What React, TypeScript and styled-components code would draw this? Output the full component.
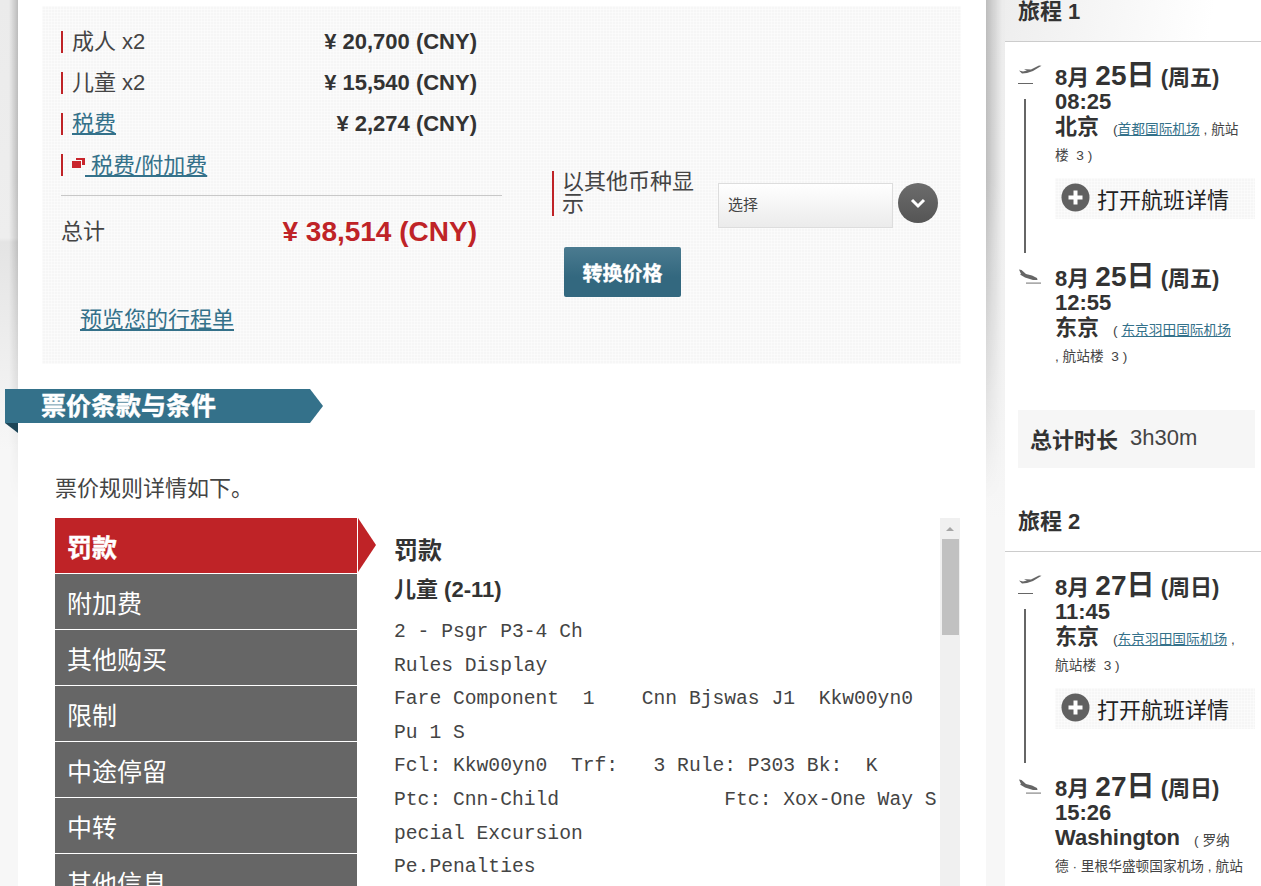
import React from "react";
import styled, { createGlobalStyle } from "styled-components";

const GlobalStyle = createGlobalStyle`
  html, body { margin: 0; padding: 0; height: 886px; overflow: hidden; background: #f6f6f6; }
  body { font-family: "Liberation Sans", "Noto Sans CJK SC", sans-serif; color: #333; }
  * { box-sizing: border-box; }
`;

const dots = `
  background-color: #f6f6f6;
  background-image:
    linear-gradient(90deg, rgba(255,255,255,.4) 1px, transparent 1px),
    linear-gradient(rgba(255,255,255,.4) 1px, transparent 1px);
  background-size: 3px 3px;
`;

const Page = styled.div`
  position: relative;
  display: flex;
  width: 1261px;
  height: 886px;
  overflow: hidden;
  background:
    linear-gradient(180deg, #ebebeb 0, #eeeeee 238px, #e4e4e4 242px, #f7f7f7 450px) 0 0 / 18px 100% no-repeat,
    linear-gradient(180deg, #ececec 0, #f0f0f0 300px, #f7f7f7 520px);
  &::before {
    content: "";
    position: absolute;
    left: 0;
    top: 0;
    width: 1005px;
    height: 520px;
    background: linear-gradient(
      90deg,
      transparent 9px,
      rgba(0, 0, 0, 0.2) 18px,
      rgba(0, 0, 0, 0.2) 986px,
      transparent 1002px
    );
    -webkit-mask-image: linear-gradient(180deg, #000 180px, transparent 500px);
    mask-image: linear-gradient(180deg, #000 180px, transparent 500px);
  }
`;

const Main = styled.main`
  position: relative;
  width: 968px;
  height: 886px;
  margin-left: 18px;
  flex: none;
  background: #fff;
`;

const PricePanel = styled.section`
  ${dots}
  display: flex;
  width: 919px;
  height: 358px;
  margin: 6px 0 25px 24px;
  padding: 0 0 0 19px;
`;

const Fares = styled.div`
  width: 441px;
  flex: none;
  padding-top: 25px;
`;

const FareRow = styled.div`
  display: flex;
  justify-content: space-between;
  align-items: center;
  height: 22px;
  margin-bottom: 19px;
  padding: 0 25px 0 9px;
  border-left: 2px solid #bf2327;
  font-size: 22px;
  color: #444;
`;

const FareLabel = styled.span<{ $lift: number }>`
  margin-bottom: ${(p) => p.$lift}px;
`;

const Amount = styled.span`
  font-weight: 700;
  font-size: 22px;
  color: #333;
`;

const FareLink = styled.a`
  color: #34718a;
  text-decoration: underline;
`;

const TaxIcon = styled.svg`
  width: 13px;
  height: 10px;
  margin-bottom: 5px;
`;

const Divider = styled.hr`
  margin: 1px 0 0;
  border: 0;
  border-top: 1px solid #c8c8c8;
`;

const TotalRow = styled.div`
  display: flex;
  justify-content: space-between;
  align-items: center;
  height: 36px;
  margin-top: 18px;
  padding-right: 25px;
  font-size: 22px;
  color: #444;
`;

const TotalLabel = styled.span`
  margin-bottom: 6px;
`;

const TotalAmount = styled.span`
  font-weight: 700;
  font-size: 28px;
  color: #bf2327;
`;

const PreviewLink = styled.a`
  display: block;
  margin: 55px 0 0 19px;
  font-size: 22px;
  line-height: 30px;
  color: #34718a;
  text-decoration: underline;
`;

const Currency = styled.div`
  margin-left: 50px;
  padding-top: 165px;
  flex: none;
`;

const CurrencyTop = styled.div`
  display: flex;
  align-items: flex-start;
`;

const CurrencyLabel = styled.div`
  width: 144px;
  height: 45px;
  padding-left: 8px;
  border-left: 2px solid #bf2327;
  font-size: 22px;
  line-height: 22px;
  color: #444;
`;

const SelectBox = styled.div`
  display: flex;
  align-items: center;
  width: 175px;
  height: 45px;
  margin: 12px 0 0 22px;
  padding: 0 0 5px 9px;
  border: 1px solid #ddd;
  background: linear-gradient(180deg, #fff, #ebebeb);
  font-size: 15px;
  color: #444;
`;

const SelectArrow = styled.div`
  display: flex;
  align-items: center;
  justify-content: center;
  width: 40px;
  height: 40px;
  margin: 12px 0 0 5px;
  border-radius: 50%;
  background: linear-gradient(180deg, #6c6c6c, #555);
`;

const ConvertButton = styled.button`
  display: block;
  width: 117px;
  height: 50px;
  margin: 19px 0 0 12px;
  padding: 0;
  border: 0;
  border-radius: 2px;
  background: linear-gradient(180deg, #4b7b90, #33687f 60%);
  color: #fff;
  font: 700 20px "Liberation Sans", "Noto Sans CJK SC", sans-serif;
  -webkit-text-stroke: 0.3px #fff;
`;

const BannerWrap = styled.div`
  position: relative;
  &::after {
    content: "";
    position: absolute;
    left: -13px;
    top: 34px;
    border-style: solid;
    border-width: 0 13px 10px 0;
    border-color: transparent #1d4658 transparent transparent;
  }
`;

const Banner = styled.h2`
  display: flex;
  align-items: center;
  width: 318px;
  height: 34px;
  margin: 0 0 0 -13px;
  padding-left: 36px;
  background: #34718a;
  clip-path: polygon(0 0, 305px 0, 100% 50%, 305px 100%, 0 100%);
  color: #fff;
  font-size: 25px;
  line-height: 34px;
  font-weight: 700;
  -webkit-text-stroke: 0.4px #fff;
`;

const Intro = styled.p`
  margin: 50px 0 13px 37px;
  font-size: 22px;
  line-height: 32px;
  color: #444;
`;

const Rules = styled.div`
  display: flex;
  margin-left: 37px;
  height: 400px;
`;

const Tabs = styled.ul`
  width: 302px;
  flex: none;
  margin: 0;
  padding: 0;
  list-style: none;
`;

const Tab = styled.li<{ $active?: boolean }>`
  position: relative;
  height: 56px;
  padding-left: 12px;
  border-bottom: 1px solid #fff;
  background: ${(p) => (p.$active ? "#bf2327" : "#666")};
  color: #fff;
  font-size: 25px;
  line-height: 60px;
  font-weight: ${(p) => (p.$active ? 700 : 400)};
  ${(p) =>
    p.$active
      ? `-webkit-text-stroke: 0.4px #fff;
      &::after {
        content: "";
        position: absolute;
        left: 303px;
        top: 0;
        border-style: solid;
        border-width: 27.5px 0 27.5px 18px;
        border-color: transparent transparent transparent #bf2327;
      }`
      : ""}
`;

const RuleBody = styled.div`
  width: 546px;
  flex: none;
  margin-left: 37px;
  padding-top: 16px;
  overflow: hidden;
`;

const RuleTitle = styled.h3`
  margin: 0;
  font-size: 24px;
  line-height: 34px;
  font-weight: 700;
  color: #333;
`;

const RuleSub = styled.h4`
  margin: 5px 0 9px;
  font-size: 22px;
  line-height: 34px;
  font-weight: 700;
  color: #333;
`;

const RuleLine = styled.div`
  font-family: "Liberation Mono", monospace;
  font-size: 19.67px;
  line-height: 33.6px;
  white-space: pre;
  color: #444;
`;

const Scrollbar = styled.div`
  position: relative;
  width: 20px;
  flex: none;
  background: #f0f0f0;
`;

const ScrollArrow = styled.div`
  position: absolute;
  left: 6px;
  top: 9px;
  border-style: solid;
  border-width: 0 4px 4px;
  border-color: transparent transparent #a6a6a6;
`;

const ScrollThumb = styled.div`
  position: absolute;
  left: 2px;
  top: 21px;
  width: 17px;
  height: 96px;
  background: #c1c1c1;
`;

const Aside = styled.aside`
  position: relative;
  width: 256px;
  height: 886px;
  margin-left: 19px;
  flex: none;
  background: #fff;
`;

const Journey = styled.section<{ $first?: boolean }>`
  padding-bottom: ${(p) => (p.$first ? "42px" : "0")};
`;

const JourneyHead = styled.h2<{ $first?: boolean }>`
  height: 42px;
  margin: 0 0 21px;
  padding-left: 13px;
  border-bottom: 1px solid #ccc;
  font-size: 22px;
  line-height: 24px;
  font-weight: 700;
  color: #333;
  background: ${(p) => (p.$first ? "linear-gradient(100deg, #eee, #fff 80%)" : "#fff")};
`;

const Stop = styled.div<{ $h: number }>`
  position: relative;
  height: ${(p) => p.$h}px;
  padding-left: 50px;
`;

const PlaneIcon = styled.svg`
  position: absolute;
  left: 13px;
  top: 2px;
  width: 24px;
  height: 20px;
`;

const RouteLine = styled.div`
  position: absolute;
  left: 19px;
  top: 36px;
  width: 2px;
  height: 154px;
  background: #666;
`;

const DateLine = styled.div`
  height: 26px;
  font-size: 22px;
  line-height: 26px;
  font-weight: 700;
  color: #333;
`;

const BigDate = styled.span`
  font-size: 28px;
`;

const TimeLine = styled.div`
  height: 26px;
  font-size: 22px;
  line-height: 26px;
  font-weight: 700;
  color: #333;
`;

const Place = styled.div`
  margin-top: -1px;
  font-size: 13.7px;
  line-height: 26px;
  color: #444;
`;

const City = styled.span`
  font-size: 22px;
  font-weight: 700;
  color: #333;
  margin-right: 14px;
`;

const AirportLink = styled.a`
  color: #34718a;
  text-decoration: underline;
`;

const DetailButton = styled.div`
  ${dots}
  display: flex;
  align-items: center;
  width: 200px;
  height: 41px;
  margin-top: 9px;
  padding: 0 0 2px 6px;
  font-size: 22px;
  color: #222;
`;

const PlusCircle = styled.svg`
  width: 29px;
  height: 29px;
  margin-right: 7px;
`;

const TotalTime = styled.div`
  display: flex;
  align-items: center;
  width: 237px;
  height: 58px;
  margin: 0 0 0 13px;
  padding: 0 0 2px 12px;
  background: #f6f6f6;
  font-size: 22px;
  color: #444;
`;

const TimeLabel = styled.span`
  font-weight: 700;
  color: #333;
  margin-right: 12px;
`;

const Departure = () => (
  <PlaneIcon viewBox="0 0 24 20">
    <path d="M1 5.5 L5 6.5 L9 5.5 L6 4.5 L8 4.2 L13 4.5 L21 0.5 L23.5 0.8 L15 6 L9 8 L4 8.5 Z" fill="#666" />
    <rect x="0" y="18" width="15" height="1" fill="#666" />
  </PlaneIcon>
);

const Arrival = () => (
  <PlaneIcon viewBox="0 0 24 20">
    <path d="M1 3.5 L3.5 4 L8 8 L14 9.5 L19 12 L19.5 14 L15 14 L7 11.5 L2 8.5 L3 8 Z" fill="#666" />
    <rect x="8" y="16.5" width="15" height="1.2" fill="#888" />
  </PlaneIcon>
);

const Plus = () => (
  <PlusCircle viewBox="0 0 29 29">
    <circle cx="14.5" cy="14.5" r="14" fill="#616161" />
    <path d="M14.5 7.5 V21.5 M7.5 14.5 H21.5" stroke="#fff" strokeWidth="4" />
  </PlusCircle>
);

const Chevron = () => (
  <svg width="18" height="12" viewBox="0 0 18 12">
    <path d="M3 3 L9 9 L15 3" fill="none" stroke="#fff" strokeWidth="3" />
  </svg>
);

const tabs = ["罚款", "附加费", "其他购买", "限制", "中途停留", "中转", "其他信息"];

const ruleLines = [
  "2 - Psgr P3-4 Ch",
  "Rules Display",
  "Fare Component  1    Cnn Bjswas J1  Kkw00yn0",
  "Pu 1 S",
  "Fcl: Kkw00yn0  Trf:   3 Rule: P303 Bk:  K",
  "Ptc: Cnn-Child              Ftc: Xox-One Way S",
  "pecial Excursion",
  "Pe.Penalties",
];

export default function App() {
  return (
    <Page>
      <GlobalStyle />
      <Main>
        <PricePanel>
          <Fares>
            <FareRow>
              <FareLabel $lift={6}>成人 x2</FareLabel>
              <Amount>¥ 20,700 (CNY)</Amount>
            </FareRow>
            <FareRow>
              <FareLabel $lift={6}>儿童 x2</FareLabel>
              <Amount>¥ 15,540 (CNY)</Amount>
            </FareRow>
            <FareRow>
              <FareLabel $lift={6}>
                <FareLink>税费</FareLink>
              </FareLabel>
              <Amount>¥ 2,274 (CNY)</Amount>
            </FareRow>
            <FareRow>
              <FareLabel $lift={4}>
                <TaxIcon viewBox="0 0 13 10">
                  <rect x="0" y="3" width="9" height="7" fill="#c9252c" />
                  <rect x="4" y="0" width="9" height="2" fill="#c9252c" />
                  <rect x="10" y="0" width="3" height="7" fill="#c9252c" />
                </TaxIcon>
                <FareLink> 税费/附加费</FareLink>
              </FareLabel>
            </FareRow>
            <Divider />
            <TotalRow>
              <TotalLabel>总计</TotalLabel>
              <TotalAmount>¥ 38,514 (CNY)</TotalAmount>
            </TotalRow>
            <PreviewLink>预览您的行程单</PreviewLink>
          </Fares>
          <Currency>
            <CurrencyTop>
              <CurrencyLabel>以其他币种显示</CurrencyLabel>
              <SelectBox>选择</SelectBox>
              <SelectArrow>
                <Chevron />
              </SelectArrow>
            </CurrencyTop>
            <ConvertButton>转换价格</ConvertButton>
          </Currency>
        </PricePanel>
        <BannerWrap>
          <Banner>票价条款与条件</Banner>
        </BannerWrap>
        <Intro>票价规则详情如下。</Intro>
        <Rules>
          <Tabs>
            {tabs.map((t, i) => (
              <Tab key={t} $active={i === 0}>
                {t}
              </Tab>
            ))}
          </Tabs>
          <RuleBody>
            <RuleTitle>罚款</RuleTitle>
            <RuleSub>儿童 (2-11)</RuleSub>
            {ruleLines.map((l) => (
              <RuleLine key={l}>{l}</RuleLine>
            ))}
          </RuleBody>
          <Scrollbar>
            <ScrollArrow />
            <ScrollThumb />
          </Scrollbar>
        </Rules>
      </Main>
      <Aside>
        <Journey $first>
          <JourneyHead $first>旅程 1</JourneyHead>
          <Stop $h={201}>
            <Departure />
            <RouteLine />
            <DateLine>
              8月 <BigDate>25日</BigDate> (周五)
            </DateLine>
            <TimeLine>08:25</TimeLine>
            <Place>
              <City>北京</City>(<AirportLink>首都国际机场</AirportLink> , 航站
              <br />
              楼 &nbsp;3 )
            </Place>
            <DetailButton>
              <Plus />
              打开航班详情
            </DetailButton>
          </Stop>
          <Stop $h={146}>
            <Arrival />
            <DateLine>
              8月 <BigDate>25日</BigDate> (周五)
            </DateLine>
            <TimeLine>12:55</TimeLine>
            <Place>
              <City>东京</City>( <AirportLink>东京羽田国际机场</AirportLink>
              <br />, 航站楼 &nbsp;3 )
            </Place>
          </Stop>
          <TotalTime>
            <TimeLabel>总计时长</TimeLabel>3h30m
          </TotalTime>
        </Journey>
        <Journey>
          <JourneyHead>旅程 2</JourneyHead>
          <Stop $h={201}>
            <Departure />
            <RouteLine />
            <DateLine>
              8月 <BigDate>27日</BigDate> (周日)
            </DateLine>
            <TimeLine>11:45</TimeLine>
            <Place>
              <City>东京</City>(<AirportLink>东京羽田国际机场</AirportLink> ,
              <br />
              航站楼 &nbsp;3 )
            </Place>
            <DetailButton>
              <Plus />
              打开航班详情
            </DetailButton>
          </Stop>
          <Stop $h={146}>
            <Arrival />
            <DateLine>
              8月 <BigDate>27日</BigDate> (周日)
            </DateLine>
            <TimeLine>15:26</TimeLine>
            <Place>
              <City>Washington</City>( 罗纳
              <br />
              德 · 里根华盛顿国家机场 , 航站
            </Place>
          </Stop>
        </Journey>
      </Aside>
    </Page>
  );
}
